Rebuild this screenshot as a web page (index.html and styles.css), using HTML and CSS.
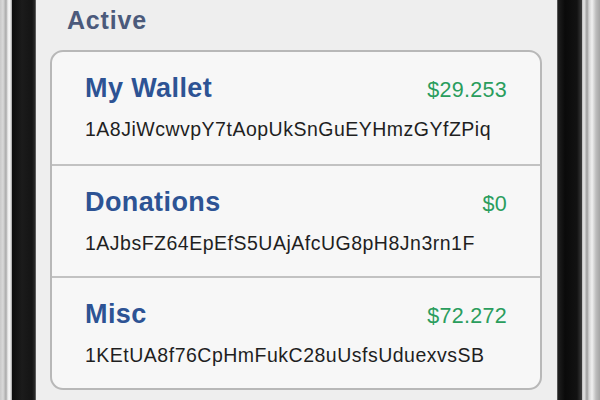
FILE: index.html
```html
<!DOCTYPE html>
<html>
<head>
<meta charset="utf-8">
<link rel="stylesheet" href="styles.css">
</head>
<body>
<div class="device">
  <div class="bezel-left"></div>
  <div class="frame-left"></div>
  <main class="screen">
    <h2 class="section-title">Active</h2>
    <ul class="wallets">
      <li class="wallet">
        <div class="wallet-head">
          <span class="wallet-name">My Wallet</span>
          <span class="wallet-amount">$29.253</span>
        </div>
        <div class="wallet-address">1A8JiWcwvpY7tAopUkSnGuEYHmzGYfZPiq</div>
      </li>
      <li class="wallet">
        <div class="wallet-head">
          <span class="wallet-name">Donations</span>
          <span class="wallet-amount">$0</span>
        </div>
        <div class="wallet-address">1AJbsFZ64EpEfS5UAjAfcUG8pH8Jn3rn1F</div>
      </li>
      <li class="wallet">
        <div class="wallet-head">
          <span class="wallet-name">Misc</span>
          <span class="wallet-amount">$72.272</span>
        </div>
        <div class="wallet-address">1KEtUA8f76CpHmFukC28uUsfsUduexvsSB</div>
      </li>
    </ul>
  </main>
  <div class="frame-right"></div>
  <div class="bezel-right"></div>
</div>
</body>
</html>
```

FILE: styles.css
```css
html, body {
  margin: 0;
  padding: 0;
  width: 600px;
  height: 400px;
  overflow: hidden;
  font-family: "Liberation Sans", Arial, Helvetica, sans-serif;
}

.device {
  display: flex;
  width: 600px;
  height: 400px;
}

.bezel-left {
  width: 12px;
  flex: none;
  background: linear-gradient(to right, #c9c9c9 0, #d9d9d9 3px, #a9a9a9 6px, #ececec 8px, #f6f6f6 10px, #9a9a9a 12px);
}

.frame-left {
  width: 24px;
  flex: none;
  background: linear-gradient(to right, #0c0c0c 0, #1b1b1b 10px, #141414 20px, #2a2a2a 23px, #8a8a8a 24px);
}

.frame-right {
  width: 25px;
  flex: none;
  background: linear-gradient(to right, #8a8a8a 0, #1e1e1e 1px, #0a0a0a 8px, #121212 20px, #3a3a3a 25px);
}

.bezel-right {
  width: 18px;
  flex: none;
  background: linear-gradient(to right, #b9b9b9 0, #e6e6e6 2px, #9c9c9c 5px, #d2d2d2 7px, #f1f1f1 10px, #bdbdbd 14px, #a5a5a5 18px);
}

.screen {
  flex: 1;
  background: #eeeeee;
  padding: 6px 15px 0 14px;
  box-sizing: border-box;
}

.section-title {
  margin: 0 0 16px 17px;
  font-size: 25px;
  line-height: 28px;
  font-weight: bold;
  color: #4b5a7b;
  letter-spacing: 0.8px;
}

.wallets {
  list-style: none;
  margin: 0;
  padding: 0;
  background: #f7f7f7;
  border: 2px solid #b8b8b8;
  border-radius: 13px;
  overflow: hidden;
}

.wallet {
  height: 112px;
  box-sizing: border-box;
  padding: 21px 33px 0 33px;
}

.wallet + .wallet {
  border-top: 2px solid #c2c2c2;
}

.wallet-head {
  display: flex;
  justify-content: space-between;
  align-items: baseline;
}

.wallet-name {
  font-size: 27px;
  line-height: 30px;
  font-weight: bold;
  color: #2d5394;
  letter-spacing: 0.4px;
}

.wallet-amount {
  font-size: 21.5px;
  color: #2a9d5d;
  letter-spacing: 0.3px;
}

.wallet-address {
  margin-top: 15px;
  font-size: 19.5px;
  line-height: 22px;
  color: #1f1f1f;
  letter-spacing: 0.5px;
}
```
